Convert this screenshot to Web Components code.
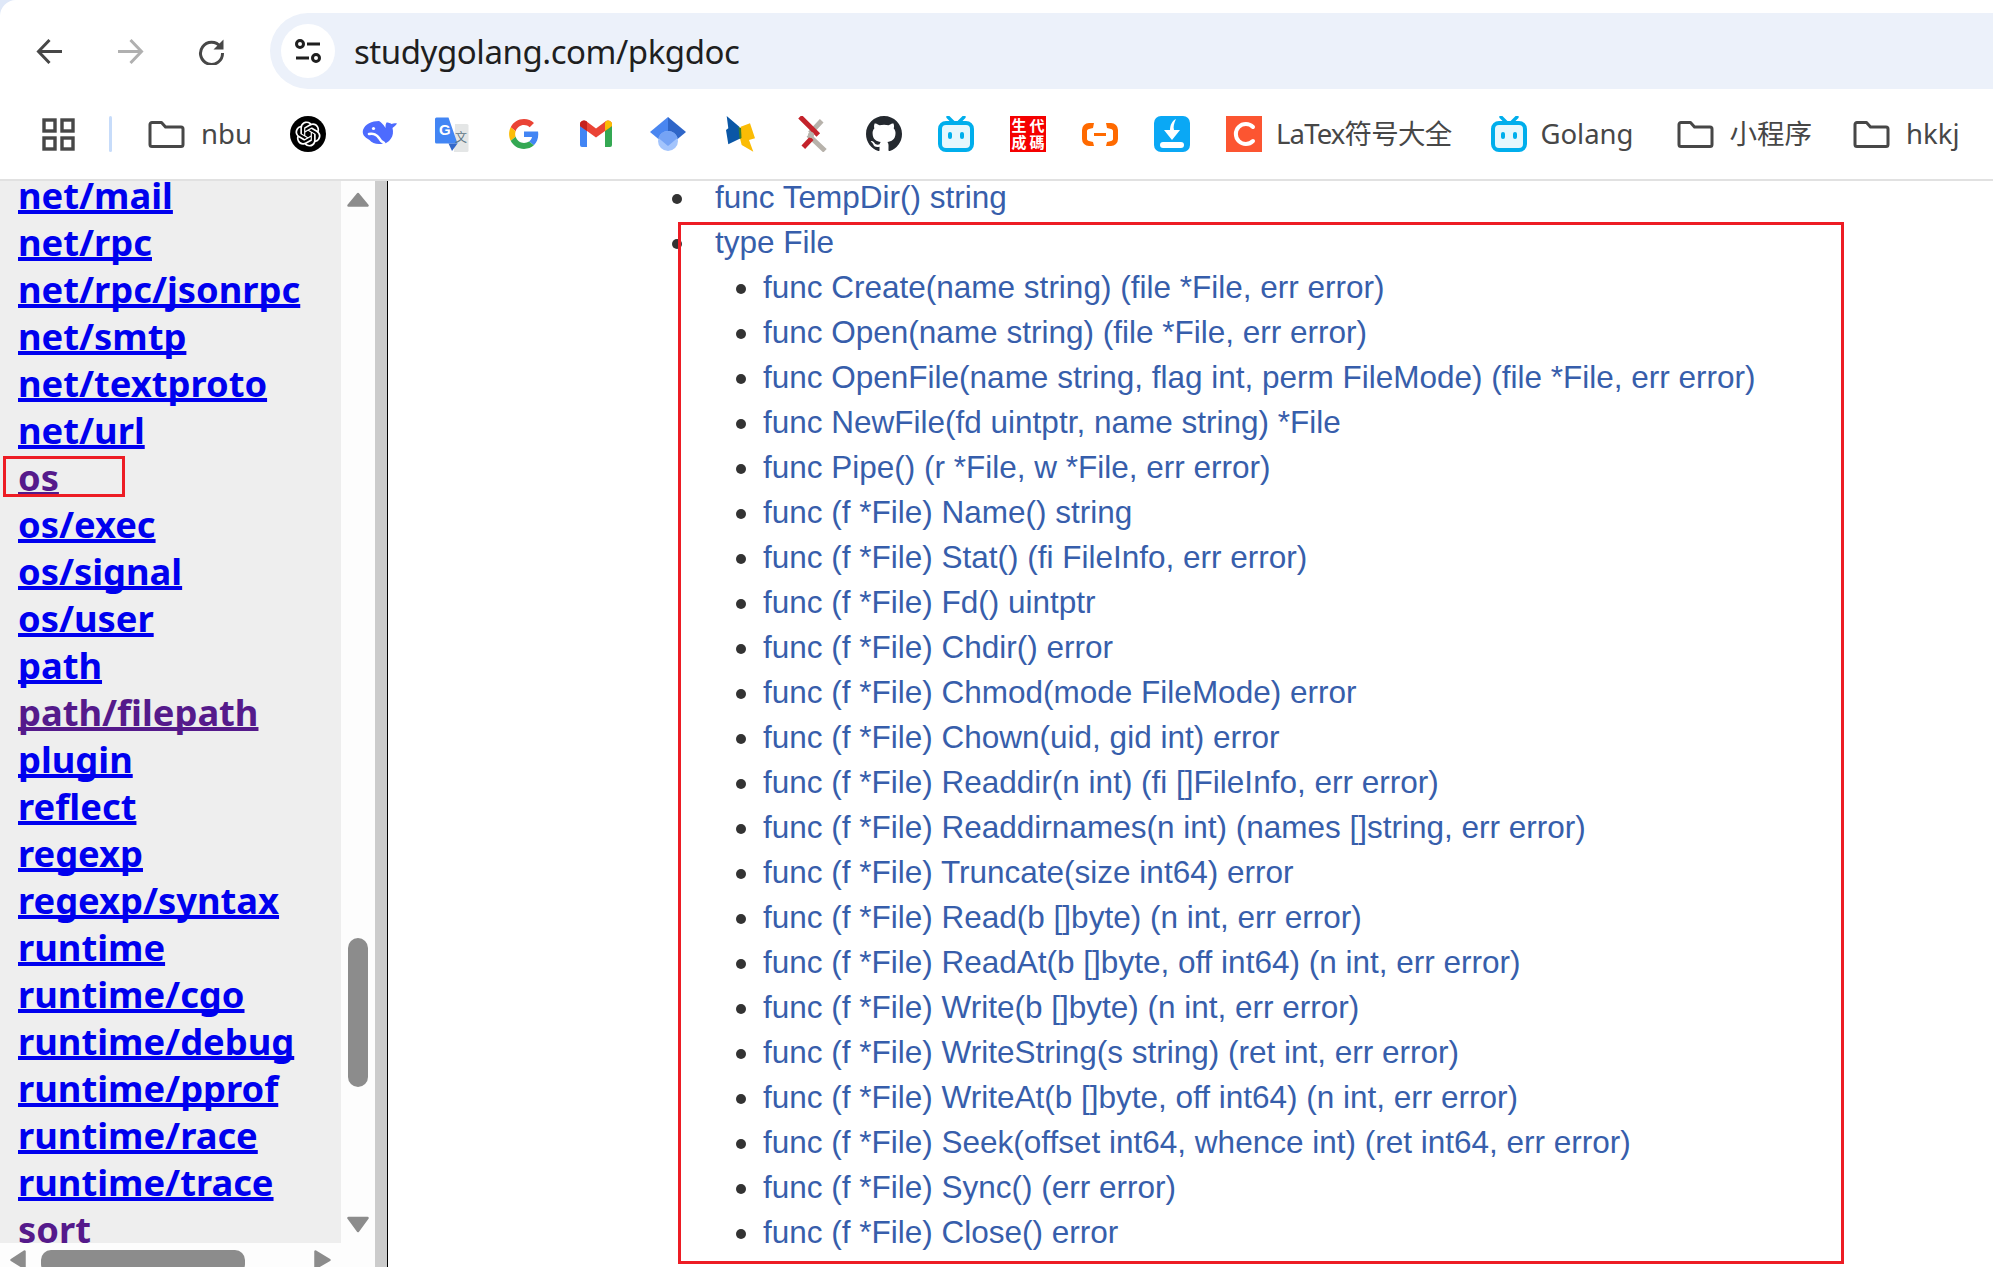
<!doctype html>
<html>
<head>
<meta charset="utf-8">
<title>studygolang.com/pkgdoc</title>
<style>
html,body{margin:0;height:100%;overflow:hidden;background:#fff}
</style>
</head>
<body>
<doc-page>
  <browser-bar slot="bar" url="studygolang.com/pkgdoc"></browser-bar>
  <pkg-sidebar slot="side"></pkg-sidebar>
  <doc-index slot="main"></doc-index>
</doc-page>

<script>
// bookmark icons, all 36x36 in the bar
const FOLDER = `<svg width="37" height="27" viewBox="0 0 37 27"><path d="M2 3.500A2 2 0 0 1 4 1.500h9.500l4 4.500H33a2 2 0 0 1 2 2v15.500a2 2 0 0 1-2 2H4a2 2 0 0 1-2-2z" fill="none" stroke="#474747" stroke-width="3" stroke-linejoin="round"/></svg>`;
const BILI = `<svg width="100%" height="100%" viewBox="0 0 36 36"><path d="M10 1l6 6M26 1l-6 6" stroke="#00aeec" stroke-width="3.400" stroke-linecap="round"/><rect x="2" y="7" width="32" height="27" rx="6" fill="#e6f7fd" stroke="#00aeec" stroke-width="4"/><rect x="10" y="16" width="4" height="7" rx="2" fill="#00aeec"/><rect x="22" y="16" width="4" height="7" rx="2" fill="#00aeec"/></svg>`;
const ICONS = {
  openai: `<svg width="36" height="36" viewBox="0 0 36 36"><circle cx="18" cy="18" r="18" fill="#000"/><g transform="translate(5.400 5.400) scale(1.050)"><path fill="#fff" d="M22.282 9.821a5.985 5.985 0 0 0-.516-4.91 6.046 6.046 0 0 0-6.51-2.9A6.065 6.065 0 0 0 4.981 4.18a5.985 5.985 0 0 0-3.998 2.9 6.046 6.046 0 0 0 .743 7.097 5.98 5.98 0 0 0 .51 4.911 6.051 6.051 0 0 0 6.515 2.9A5.985 5.985 0 0 0 13.26 24a6.056 6.056 0 0 0 5.772-4.206 5.99 5.99 0 0 0 3.997-2.9 6.056 6.056 0 0 0-.747-7.073zM13.26 22.43a4.476 4.476 0 0 1-2.876-1.04l.141-.081 4.779-2.758a.795.795 0 0 0 .392-.681v-6.737l2.02 1.168a.071.071 0 0 1 .038.052v5.583a4.504 4.504 0 0 1-4.494 4.494zM3.6 18.304a4.47 4.47 0 0 1-.535-3.014l.142.085 4.783 2.759a.771.771 0 0 0 .78 0l5.843-3.369v2.332a.08.08 0 0 1-.033.062L9.74 19.95a4.5 4.5 0 0 1-6.14-1.646zM2.34 7.896a4.485 4.485 0 0 1 2.366-1.973V11.6a.766.766 0 0 0 .388.676l5.815 3.355-2.02 1.168a.076.076 0 0 1-.071 0l-4.83-2.786A4.504 4.504 0 0 1 2.34 7.872zm16.597 3.855l-5.833-3.387L15.119 7.2a.076.076 0 0 1 .071 0l4.83 2.791a4.494 4.494 0 0 1-.676 8.105v-5.678a.79.79 0 0 0-.407-.667zm2.01-3.023l-.141-.085-4.774-2.782a.776.776 0 0 0-.785 0L9.409 9.23V6.897a.066.066 0 0 1 .028-.061l4.83-2.787a4.5 4.5 0 0 1 6.68 4.66zm-12.64 4.135l-2.02-1.164a.08.08 0 0 1-.038-.057V6.075a4.5 4.5 0 0 1 7.375-3.453l-.142.08L8.704 5.46a.795.795 0 0 0-.393.681zm1.097-2.365l2.602-1.5 2.607 1.5v2.999l-2.597 1.5-2.607-1.5z"/></g></svg>`,
  whale: `<svg width="36" height="36" viewBox="0 0 36 36"><path fill="#4d6bfe" d="M1 14C3 8 10 5 17 5c2 1 4 3 6.500 7 0-2 0-4 1-5.500 2 0 3.500.5 5 1.500 2-1 4-1 5.500-.5-1 2-3 3-4.500 4.500 1 4 .5 7.500-1.500 10.500-2.500 4-7 6-12 5.500-4 0-7.500-1.500-9.500-4C2 21 0 18 1 14z"/><path fill="none" stroke="#fff" stroke-width="2.600" stroke-linecap="round" d="M7 18c4-1 8 1 10 4 1 2 3 4 5 5"/><circle cx="11.500" cy="12.500" r="1.600" fill="#fff"/></svg>`,
  translate: `<svg width="36" height="36" viewBox="0 0 36 36"><path fill="#e4e6e6" d="M21 8h12a1.500 1.500 0 0 1 1.500 1.500v25a1.500 1.500 0 0 1-1.500 1.500H20z"/><path fill="#4285f4" d="M2.500 1.500h12l9 26H2.500a1.500 1.500 0 0 1-1.500-1.500V3a1.500 1.500 0 0 1 1.500-1.500z"/><path fill="#3367c9" d="M14.500 27.500h9l-5.500 7.500z"/><text x="5" y="19" font-family="Liberation Sans" font-weight="700" font-size="15" fill="#fff">G</text><text x="21" y="26" font-family="Noto Sans CJK SC" font-size="12" fill="#5f7686">文</text></svg>`,
  google: `<svg width="36" height="36" viewBox="-5 -5 58 58"><path fill="#EA4335" d="M24 9.5c3.54 0 6.71 1.22 9.21 3.6l6.85-6.85C35.9 2.38 30.47 0 24 0 14.62 0 6.51 5.38 2.56 13.22l7.98 6.19C12.43 13.72 17.74 9.5 24 9.5z"/><path fill="#4285F4" d="M46.98 24.55c0-1.57-.15-3.09-.38-4.55H24v9.02h12.94c-.58 2.96-2.26 5.48-4.78 7.18l7.73 6c4.51-4.18 7.09-10.36 7.09-17.65z"/><path fill="#FBBC05" d="M10.53 28.59c-.48-1.45-.76-2.99-.76-4.59s.27-3.14.76-4.59l-7.98-6.19C.92 16.46 0 20.12 0 24c0 3.88.92 7.54 2.56 10.78l7.97-6.19z"/><path fill="#34A853" d="M24 48c6.48 0 11.93-2.13 15.89-5.81l-7.73-6c-2.15 1.45-4.92 2.3-8.16 2.3-6.26 0-11.57-4.22-13.47-9.91l-7.98 6.19C6.51 42.62 14.62 48 24 48z"/></svg>`,
  gmail: `<svg width="36" height="36" viewBox="0 0 36 36"><path fill="#4285f4" d="M2 31V9l7 5v17H4a2 2 0 0 1-2-2z"/><path fill="#34a853" d="M27 31V14l7-5v20a2 2 0 0 1-2 2z"/><path fill="#ea4335" d="M9 15L2 10V8c0-3 4-4.500 6-3l10 7.500L28 5c2-1.500 6 0 6 3v2l-7 5-9 6.500z"/><path fill="#fbbc04" d="M27 7l1-2c2-1.500 6 0 6 3v2l-7 5z"/><path fill="#c5221f" d="M2 8c0-3 4-4.500 6-3l1 .8V15L2 10z"/></svg>`,
  diamond: `<svg width="36" height="36" viewBox="0 0 36 36"><path fill="#4a86f0" d="M18 1L0 16l18 15z"/><path fill="#2f66c8" d="M18 1l18 15-18 15z"/><circle cx="18" cy="25" r="10" fill="#a3c4fc"/><path fill="#75a3f5" d="M8.500 22a10 10 0 0 1 19 0L18 30z"/></svg>`,
  bolt: `<svg width="36" height="36" viewBox="0 0 36 36"><path fill="#fbbc05" d="M18.700 10.700L28 7.300 33 22.300 27 24 31.300 35.700 19.700 29 18 22.300z"/><path fill="#0b57a6" d="M4.700 0L17.300 10.700 18.700 22.300 6.300 28.300 4 14 6.300 12.300z"/><path fill="#3a7d2c" d="M16.500 11l2.500 1 .5 10-2 1z"/></svg>`,
  cross: `<svg width="36" height="36" viewBox="0 0 36 36" fill="none" stroke-width="5"><path d="M27.700 4.700L16 17.300M14.300 19L31 34.700" stroke="#b7b2ab"/><path d="M6 .7L24.300 19M9.300 31.300L17.700 22.300" stroke="#c4232b"/><circle cx="17" cy="19" r="3" fill="#b7b2ab" stroke="none"/></svg>`,
  github: `<svg width="36" height="36" viewBox="0 0 16 16"><path fill="#24292f" d="M8 0C3.58 0 0 3.58 0 8c0 3.54 2.29 6.53 5.47 7.59.4.07.55-.17.55-.38 0-.19-.01-.82-.01-1.49-2.01.37-2.53-.49-2.69-.94-.09-.23-.48-.94-.82-1.13-.28-.15-.68-.52-.01-.53.63-.01 1.08.58 1.23.82.72 1.21 1.87.87 2.33.66.07-.52.28-.87.51-1.07-1.78-.2-3.64-.89-3.64-3.95 0-.87.31-1.59.82-2.15-.08-.2-.36-1.02.08-2.12 0 0 .67-.21 2.2.82.64-.18 1.32-.27 2-.27.68 0 1.36.09 2 .27 1.53-1.04 2.2-.82 2.2-.82.44 1.1.16 1.92.08 2.12.51.56.82 1.27.82 2.15 0 3.07-1.87 3.75-3.65 3.95.29.25.54.73.54 1.48 0 1.07-.01 1.93-.01 2.2 0 .21.15.46.55.38A8.013 8.013 0 0 0 16 8c0-4.42-3.58-8-8-8z"/></svg>`,
  bili: BILI,
  seal: `<seal-icon></seal-icon>`,
  ali: `<svg width="36" height="36" viewBox="0 0 36 36"><path fill="#ff6a00" d="M12 7H7a7 7 0 0 0-7 7v9a7 7 0 0 0 7 7h5l-1-4-4-1c-1-.3-2-1-2-2v-8c0-1 1-2 2-2l4-1zM24 7h5a7 7 0 0 1 7 7v9a7 7 0 0 1-7 7h-5l1-4 4-1c1-.3 2-1 2-2v-8c0-1-1-2-2-2l-4-1z"/><rect x="12" y="17" width="12" height="3" fill="#ff6a00"/></svg>`,
  down: `<svg width="36" height="36" viewBox="0 0 36 36"><rect width="36" height="36" rx="7" fill="#0aa8f5"/><path fill="#fff" d="M22 3c-4 2-6 6-6 11h-6l8 10 8-10h-6c-1-3 0-7 2-11z"/><rect x="6" y="26" width="24" height="6" rx="3" fill="#fff"/></svg>`,
  csdn: `<svg width="36" height="36" viewBox="0 0 36 36"><rect width="36" height="36" fill="#fc5531"/><path d="M27 11a10 10 0 1 0 0 14" fill="none" stroke="#fff" stroke-width="4" stroke-linecap="round"/></svg>`
};

class SealIcon extends HTMLElement {
  constructor() {
    super();
    this.attachShadow({ mode: "open" }).innerHTML = `<style>
      :host{display:grid;width:36px;height:36px;background:#f50000;color:#fff;grid-template-columns:1fr 1fr;grid-auto-rows:17px;align-content:center;place-items:center;font:700 15px/17px "Liberation Sans","Noto Sans CJK TC",sans-serif}
    </style><span>生</span><span>代</span><span>成</span><span>碼</span>`;
  }
}
customElements.define("seal-icon", SealIcon);

class DocPage extends HTMLElement {
  constructor() {
    super();
    this.attachShadow({ mode: "open" }).innerHTML = `<style>
      :host{display:flex;flex-direction:column;height:1267px;width:1993px;overflow:hidden;position:relative;background:#dfe8f8}
      .body{flex:1;display:flex;min-height:0;background:#fff}
      .rail{width:12px;flex:none;background:#ccc;border-right:1px solid #000}
      .main{flex:1;min-width:0;overflow:hidden}
    </style>
    <slot name="bar"></slot>
    <div class="body">
      <slot name="side"></slot>
      <div class="rail"></div>
      <div class="main"><slot name="main"></slot></div>
    </div>`;
  }
}
customElements.define("doc-page", DocPage);

class BrowserBar extends HTMLElement {
  constructor() {
    super();
    const folder = label => `<span class="mark">${FOLDER}</span><span class="label">${label}</span>`;
    const icon = k => `<span class="ic">${ICONS[k]}</span>`;
    this.attachShadow({ mode: "open" }).innerHTML = `<style>
      :host{display:block;height:181px;box-sizing:border-box;background:#fff;border-top-left-radius:16px;border-bottom:2px solid #e1e1e1;flex:none;font-family:"Noto Sans","Noto Sans CJK SC",sans-serif;color:#474747}
      .nav{height:76px;padding-top:13px;display:flex;align-items:center}
      .btn{width:27px;height:27px;display:block;flex:none}
      .btn svg{display:block}
      .back{margin-left:36px}
      .fwd{margin-left:54px}
      .reload{margin-left:54px}
      .addr{margin-left:45px;flex:1;height:76px;border-radius:38px 0 0 38px;background:#ecf1fa;display:flex;align-items:center;padding-left:11px}
      .site{width:54px;height:54px;border-radius:50%;background:#fff;display:flex;align-items:center;justify-content:center;flex:none}
      .url{margin-left:19px;font:33px/1 "Noto Sans",sans-serif;letter-spacing:-.45px;color:#1f1f1f;white-space:nowrap}
      .marks{height:90px;display:flex;align-items:center;padding-left:42px}
      .grid{width:33px;height:33px;flex:none}
      .sep{width:3px;height:36px;background:#c7dcfa;border-radius:2px;margin:0 36px 0 34px;flex:none}
      .mark{flex:none;display:block;height:27px}
      .mark svg{display:block}
      .label{font-size:27.500px;line-height:36px;margin-left:16px;white-space:nowrap}
      .ic{flex:none;display:block;width:36px;height:36px;margin-right:36px}
      .ic svg{display:block}
      .last{margin-right:14px}
      .bili{margin:0 12px 0 39px;width:38px}
      .flat{margin-left:0}
      .tight{letter-spacing:-.8px}
      .gap{flex:none}
    </style>
    <div class="nav">
      <span class="btn back"><svg width="27" height="27" viewBox="0 0 27 27"><path d="M26 13.500H3M13.500 2L2.500 13.500 13.500 25" fill="none" stroke="#474747" stroke-width="3"/></svg></span>
      <span class="btn fwd"><svg width="27" height="27" viewBox="0 0 27 27"><path d="M1 13.500h23M13.500 2l11 11.500L13.500 25" fill="none" stroke="#b0b0b0" stroke-width="3"/></svg></span>
      <span class="btn reload"><svg width="27" height="27" viewBox="0 0 27 27"><path d="M22.500 9A11 11 0 1 0 24.500 15" fill="none" stroke="#474747" stroke-width="3"/><path d="M25.500 1.500v10h-10z" fill="#474747"/></svg></span>
      <div class="addr">
        <span class="site"><svg width="28" height="28" viewBox="0 0 28 28" fill="none" stroke="#1f1f1f" stroke-width="3"><circle cx="6" cy="7" r="3.500"/><path d="M13 7h13M2 21h13"/><circle cx="22" cy="21" r="3.500"/></svg></span>
        <span class="url">${this.getAttribute("url") || ""}</span>
      </div>
    </div>
    <div class="marks">
      <svg class="grid" viewBox="0 0 33 33" fill="none" stroke="#474747" stroke-width="3.400"><rect x="2" y="2" width="11" height="11"/><rect x="20" y="2" width="11" height="11"/><rect x="2" y="20" width="11" height="11"/><rect x="20" y="20" width="11" height="11"/></svg>
      <span class="sep"></span>
      ${folder("nbu")}
      <span class="gap" style="width:38px"></span>
      ${["openai","whale","translate","google","gmail","diamond","bolt","cross","github","bili","seal","ali","down"].map(icon).join("")}
      <span class="ic last">${ICONS.csdn}</span>
      <span class="label flat tight">LaTex符号大全</span>
      <span class="ic bili">${BILI}</span>
      <span class="label flat">Golang</span>
      <span class="gap" style="width:43px"></span>
      ${folder("小程序")}
      <span class="gap" style="width:41px"></span>
      ${folder("hkkj")}
    </div>`;
  }
}
customElements.define("browser-bar", BrowserBar);

class PkgLink extends HTMLElement {
  constructor() {
    super();
    this.attachShadow({ mode: "open" }).innerHTML = `<style>
      :host{display:block;height:47px;line-height:47px;white-space:nowrap}
      a{color:#0000ee;text-decoration:underline;text-decoration-thickness:4px;text-underline-offset:1px;text-decoration-skip-ink:none}
      :host([visited]) a{color:#551a8b}
    </style><a href="#"><slot></slot></a>`;
  }
}
customElements.define("pkg-link", PkgLink);

class PkgSidebar extends HTMLElement {
  constructor() {
    super();
    const pkgs = ["net/mail","net/rpc","net/rpc/jsonrpc","net/smtp","net/textproto","net/url","*os","os/exec","os/signal","os/user","path","*path/filepath","plugin","reflect","regexp","regexp/syntax","runtime","runtime/cgo","runtime/debug","runtime/pprof","runtime/race","runtime/trace","*sort"];
    this.attachShadow({ mode: "open" }).innerHTML = `<style>
      :host{display:grid;grid-template-columns:341px 34px;grid-template-rows:1fr 24px;width:375px;flex:none;height:100%;background:#fdfdfd;position:relative;overflow:hidden}
      .list{background:#eee;overflow:hidden;padding-left:18px;font:700 36.300px "Noto Sans",sans-serif}
      .rows{margin-top:-9px}
      .vbar{display:flex;flex-direction:column;align-items:center;padding-top:11px;grid-row:1 / 3;grid-column:2}
      .vbar svg{display:block;flex:none}
      .vthumb{width:20px;height:149px;border-radius:10px;background:#8c8c8c;margin-top:730px;flex:none}
      .vdown{margin-top:129px}
      .hbar{display:flex;align-items:flex-start;padding:7px 0 0 10px}
      .hbar svg{flex:none;display:block}
      .hthumb{width:204px;height:24px;border-radius:10px;background:#8c8c8c;margin:0 69px 0 15px;flex:none}
      .mark{position:absolute;left:3px;top:275px;width:116px;height:35px;border:3px solid #ed1c24}
    </style>
    <div class="list"><div class="rows">
      ${pkgs.map(p => p[0] == "*" ? `<pkg-link visited>${p.slice(1)}</pkg-link>` : `<pkg-link>${p}</pkg-link>`).join("")}
    </div></div>
    <div class="vbar">
      <svg width="22" height="16" viewBox="0 0 22 16"><path d="M11 2L20.500 13.500H1.500z" fill="#8c8c8c" stroke="#8c8c8c" stroke-width="2.500" stroke-linejoin="round"/></svg>
      <div class="vthumb"></div>
      <svg class="vdown" width="22" height="17" viewBox="0 0 22 17"><path d="M1.500 2H20.500L11 15z" fill="#8c8c8c" stroke="#8c8c8c" stroke-width="2.500" stroke-linejoin="round"/></svg>
    </div>
    <div class="hbar">
      <svg width="16" height="20" viewBox="0 0 16 20"><path d="M14.500 1.500V18L1.500 10z" fill="#8c8c8c" stroke="#8c8c8c" stroke-width="2.500" stroke-linejoin="round"/></svg>
      <div class="hthumb"></div>
      <svg width="17" height="20" viewBox="0 0 17 20"><path d="M1.500 1.500V18L15.500 10z" fill="#8c8c8c" stroke="#8c8c8c" stroke-width="2.500" stroke-linejoin="round"/></svg>
    </div>
    <div class="mark"></div>`;
  }
}
customElements.define("pkg-sidebar", PkgSidebar);

class DocItem extends HTMLElement {
  constructor() {
    super();
    this.attachShadow({ mode: "open" }).innerHTML = `<style>
      :host{display:flex;align-items:center;height:45px;white-space:nowrap;color:#375eab}
      i{width:10px;height:10px;border-radius:50%;background:#333;flex:none;margin:2px 33px 0 -43px}
      :host([sub]) i{margin:2px 17px 0 -27px}
    </style><i></i><slot></slot>`;
  }
}
customElements.define("doc-item", DocItem);

class DocIndex extends HTMLElement {
  constructor() {
    super();
    const methods = ["func Create(name string) (file *File, err error)","func Open(name string) (file *File, err error)","func OpenFile(name string, flag int, perm FileMode) (file *File, err error)","func NewFile(fd uintptr, name string) *File","func Pipe() (r *File, w *File, err error)","func (f *File) Name() string","func (f *File) Stat() (fi FileInfo, err error)","func (f *File) Fd() uintptr","func (f *File) Chdir() error","func (f *File) Chmod(mode FileMode) error","func (f *File) Chown(uid, gid int) error","func (f *File) Readdir(n int) (fi []FileInfo, err error)","func (f *File) Readdirnames(n int) (names []string, err error)","func (f *File) Truncate(size int64) error","func (f *File) Read(b []byte) (n int, err error)","func (f *File) ReadAt(b []byte, off int64) (n int, err error)","func (f *File) Write(b []byte) (n int, err error)","func (f *File) WriteString(s string) (ret int, err error)","func (f *File) WriteAt(b []byte, off int64) (n int, err error)","func (f *File) Seek(offset int64, whence int) (ret int64, err error)","func (f *File) Sync() (err error)","func (f *File) Close() error"];
    const esc = s => s.replace(/</g, "&lt;");
    this.attachShadow({ mode: "open" }).innerHTML = `<style>
      :host{display:block;position:relative;font:31.500px "Liberation Sans",Arial,sans-serif;margin-top:-6px;padding-left:327px}
      .subs{padding-left:48px}
      .mark{position:absolute;left:290px;top:47px;width:1160px;height:1036px;border:3px solid #ed1c24}
    </style>
    <doc-item>func TempDir() string</doc-item>
    <doc-item>type File</doc-item>
    <div class="subs">${methods.map(m => `<doc-item sub>${esc(m)}</doc-item>`).join("")}</div>
    <div class="mark"></div>`;
  }
}
customElements.define("doc-index", DocIndex);
</script>
</body>
</html>
